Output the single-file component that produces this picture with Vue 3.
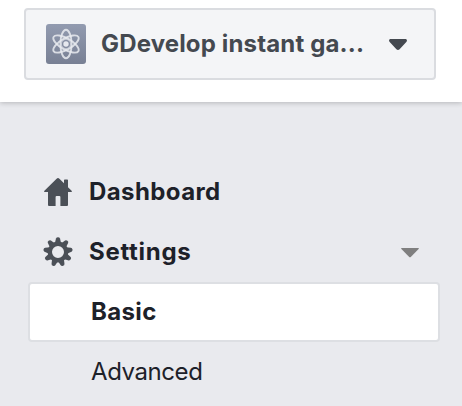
<script setup>
const teeth = Array.from({ length: 9 }, (_, i) => i * 40)
const orbits = [0, 60, 120]
</script>

<template>
  <div class="page">
    <header class="header">
      <button class="picker">
        <svg class="app-icon" viewBox="0 0 40 40">
          <defs>
            <linearGradient id="tile" x1="0" y1="0" x2="0" y2="1">
              <stop offset="0" stop-color="#929bb0" />
              <stop offset="1" stop-color="#788094" />
            </linearGradient>
          </defs>
          <rect width="40" height="40" rx="3" fill="url(#tile)" />
          <g fill="none" stroke="#e9ebf0" stroke-opacity="0.85" stroke-width="1.9">
            <ellipse
              v-for="angle in orbits"
              :key="angle"
              cx="20"
              cy="20"
              rx="5.6"
              ry="14.3"
              :transform="`rotate(${angle} 20 20)`"
            />
            <circle cx="20" cy="20" r="4.6" stroke-width="1" opacity="0.6" />
          </g>
          <circle cx="20" cy="20" r="2.7" fill="#e6e8ee" />
        </svg>
        <span class="app-name">GDevelop instant ga...</span>
        <svg class="caret" viewBox="0 0 18 12">
          <path d="M1.7 0H16.3C18 0 18.5 1.8 17.3 3L10.6 10.2C9.6 11.3 8.4 11.3 7.4 10.2L.7 3C-.5 1.8 0 0 1.7 0Z" fill="#444950" />
        </svg>
      </button>
    </header>

    <nav class="menu">
      <a class="item">
        <svg class="item-icon" viewBox="0 0 30 30">
          <path d="M15 1Q15.7 1 16.4 1.7L21 6.2V3.2Q21 2.5 21.7 2.5H24.3Q25 2.5 25 3.2V10.2L28.6 13.8Q29.6 15 28.2 15H25V28Q25 29 24 29H17.4V20Q17.4 19 16.4 19H13.6Q12.6 19 12.6 20V29H6Q5 29 5 28V15H1.8Q.4 15 1.4 13.8L13.6 1.7Q14.3 1 15 1Z" fill="#4b5057" />
        </svg>
        <span class="label dashboard">Dashboard</span>
      </a>
      <a class="item">
        <svg class="item-icon" viewBox="0 0 30 30">
          <g fill="#4b5057">
            <path
              v-for="angle in teeth"
              :key="angle"
              d="M11.8 6.5L13 1.6Q13.4.3 15 .3T17 1.6L18.2 6.5Z"
              :transform="`rotate(${angle} 15 15)`"
            />
          </g>
          <circle cx="15" cy="15" r="8.2" fill="none" stroke="#4b5057" stroke-width="4.4" />
        </svg>
        <span class="label settings">Settings</span>
        <svg class="toggle" viewBox="0 0 18 10">
          <path d="M.6 0H17.4Q18.2.3 17.6 1L9.8 8.9Q9 9.6 8.2 8.9L.4 1Q-.2.3.6 0Z" fill="#7f7f7f" />
        </svg>
      </a>
      <a class="sub selected"><span>Basic</span></a>
      <a class="sub"><span>Advanced</span></a>
    </nav>
  </div>
</template>

<style>
body {
  margin: 0;
  background: #e9eaee;
}
</style>

<style scoped>
.page {
  height: 406px;
  overflow: hidden;
  background: #e9eaee;
  font-family: Inter, "Liberation Sans", sans-serif;
  color: #1d2129;
}
.header {
  box-sizing: border-box;
  height: 102px;
  padding: 8px 26px 0 24px;
  background: #fff;
  box-shadow: 0 1px 5px rgba(0, 0, 0, 0.22);
}
.picker {
  box-sizing: border-box;
  display: flex;
  align-items: center;
  width: 100%;
  height: 72px;
  padding: 0 27px 0 20px;
  border: 2px solid #dadce0;
  border-radius: 4px;
  background: #f4f5f7;
  font: inherit;
}
.app-icon {
  width: 40px;
  height: 40px;
  margin-right: 15px;
}
.app-name {
  font-size: 24px;
  font-weight: 650;
  letter-spacing: 0.15px;
  line-height: 30px;
  white-space: nowrap;
  color: #444950;
}
.caret {
  width: 18px;
  height: 12px;
  margin-top: 1px;
  margin-left: auto;
}
.menu {
  padding: 60px 22px 0 28px;
}
.item {
  display: flex;
  align-items: center;
  height: 60px;
  padding: 0 21px 0 15px;
}
.item-icon {
  width: 30px;
  height: 30px;
  margin-right: 16px;
}
.label {
  padding-bottom: 2px;
  font-size: 24px;
  font-weight: 650;
}
.dashboard {
  letter-spacing: 0.4px;
}
.settings {
  letter-spacing: 0.7px;
}
.toggle {
  width: 18px;
  height: 10px;
  margin-top: 1px;
  margin-left: auto;
}
.sub {
  box-sizing: border-box;
  display: flex;
  align-items: center;
  height: 60px;
  padding: 0 0 2px 61px;
  border: 2px solid transparent;
  font-size: 24px;
  letter-spacing: -0.42px;
}
.selected {
  border-color: #dddfe3;
  border-radius: 4px;
  background: #fff;
  font-weight: 650;
  letter-spacing: 0.35px;
}
</style>
